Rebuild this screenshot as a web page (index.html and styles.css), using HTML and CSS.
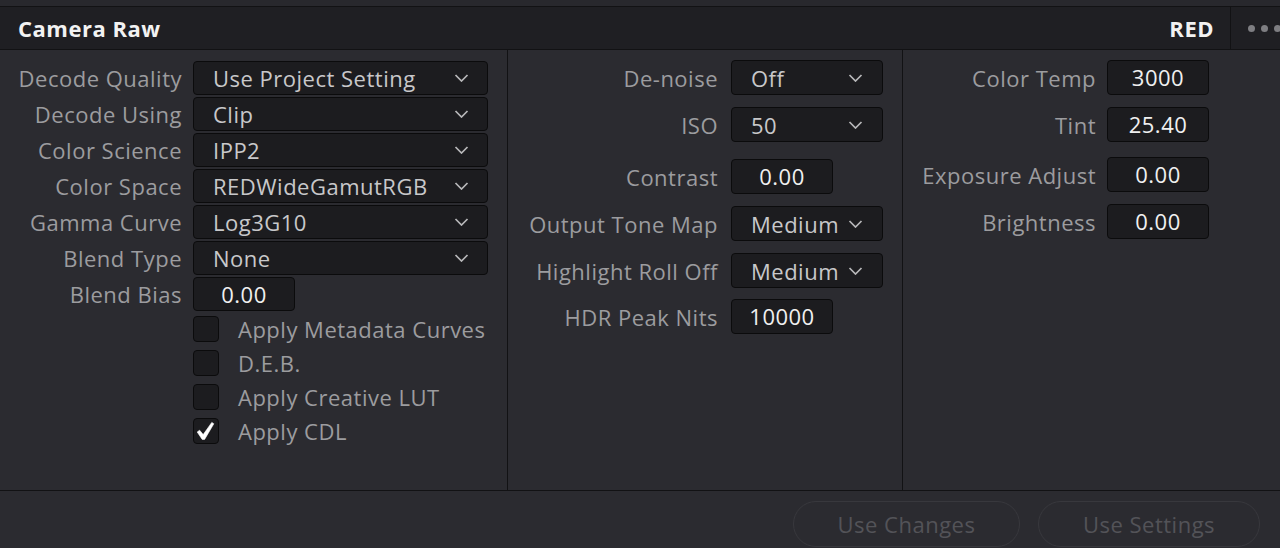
FILE: index.html
```html
<!DOCTYPE html>
<html>
<head>
<meta charset="utf-8">
<link rel="stylesheet" href="styles.css">
</head>
<body>
<div class="app">
  <div class="topstrip"></div>
  <header class="header">
    <div class="title">Camera Raw</div>
    <div class="brand">RED</div>
    <div class="more"><span class="dot"></span><span class="dot"></span><span class="dot"></span></div>
  </header>
  <main class="panels">
    <section class="col col-left">
      <div class="row"><div class="lbl">Decode Quality</div>
        <div class="dd"><span class="val">Use Project Setting</span><svg class="chev" viewBox="0 0 14 8"><path d="M1 1 L7 7 L13 1"/></svg></div></div>
      <div class="row"><div class="lbl">Decode Using</div>
        <div class="dd"><span class="val">Clip</span><svg class="chev" viewBox="0 0 14 8"><path d="M1 1 L7 7 L13 1"/></svg></div></div>
      <div class="row"><div class="lbl">Color Science</div>
        <div class="dd"><span class="val">IPP2</span><svg class="chev" viewBox="0 0 14 8"><path d="M1 1 L7 7 L13 1"/></svg></div></div>
      <div class="row"><div class="lbl">Color Space</div>
        <div class="dd"><span class="val">REDWideGamutRGB</span><svg class="chev" viewBox="0 0 14 8"><path d="M1 1 L7 7 L13 1"/></svg></div></div>
      <div class="row"><div class="lbl">Gamma Curve</div>
        <div class="dd"><span class="val">Log3G10</span><svg class="chev" viewBox="0 0 14 8"><path d="M1 1 L7 7 L13 1"/></svg></div></div>
      <div class="row"><div class="lbl">Blend Type</div>
        <div class="dd"><span class="val">None</span><svg class="chev" viewBox="0 0 14 8"><path d="M1 1 L7 7 L13 1"/></svg></div></div>
      <div class="row"><div class="lbl">Blend Bias</div>
        <div class="num">0.00</div></div>
      <div class="check"><span class="box"></span><span class="ctext">Apply Metadata Curves</span></div>
      <div class="check"><span class="box"></span><span class="ctext">D.E.B.</span></div>
      <div class="check"><span class="box"></span><span class="ctext">Apply Creative LUT</span></div>
      <div class="check"><span class="box checked"><svg viewBox="0 0 24 24"><path d="M3.2 13 L5.6 11.2 L9.2 15.6 L17.8 3.4 L19.8 4.8 L10.6 20.4 L8.2 20.4 Z"/></svg></span><span class="ctext">Apply CDL</span></div>
    </section>
    <section class="col col-mid">
      <div class="row"><div class="lbl">De-noise</div>
        <div class="dd"><span class="val">Off</span><svg class="chev" viewBox="0 0 14 8"><path d="M1 1 L7 7 L13 1"/></svg></div></div>
      <div class="row r-iso"><div class="lbl">ISO</div>
        <div class="dd"><span class="val">50</span><svg class="chev" viewBox="0 0 14 8"><path d="M1 1 L7 7 L13 1"/></svg></div></div>
      <div class="row r-contrast"><div class="lbl">Contrast</div>
        <div class="num">0.00</div></div>
      <div class="row r-tone"><div class="lbl">Output Tone Map</div>
        <div class="dd"><span class="val">Medium</span><svg class="chev" viewBox="0 0 14 8"><path d="M1 1 L7 7 L13 1"/></svg></div></div>
      <div class="row r-roll"><div class="lbl">Highlight Roll Off</div>
        <div class="dd"><span class="val">Medium</span><svg class="chev" viewBox="0 0 14 8"><path d="M1 1 L7 7 L13 1"/></svg></div></div>
      <div class="row r-nits"><div class="lbl">HDR Peak Nits</div>
        <div class="num">10000</div></div>
    </section>
    <section class="col col-right">
      <div class="row"><div class="lbl">Color Temp</div>
        <div class="num">3000</div></div>
      <div class="row r-tint"><div class="lbl">Tint</div>
        <div class="num">25.40</div></div>
      <div class="row r-exp"><div class="lbl">Exposure Adjust</div>
        <div class="num">0.00</div></div>
      <div class="row r-bright"><div class="lbl">Brightness</div>
        <div class="num">0.00</div></div>
    </section>
  </main>
  <footer class="footer">
    <button class="btn btn-changes">Use Changes</button>
    <button class="btn btn-settings">Use Settings</button>
  </footer>
</div>
</body>
</html>
```
FILE: styles.css
```css
* { box-sizing: border-box; }
html, body {
  margin: 0;
  padding: 0;
  background: #2b2b30;
  font-family: "Open Sans", "Noto Sans", sans-serif;
  font-size: 22px;
  letter-spacing: 0.5px;
  color: #9c9c9f;
}
.app {
  width: 1280px;
  height: 548px;
  display: flex;
  flex-direction: column;
  overflow: hidden;
}
.topstrip {
  height: 7px;
  background: #28282d;
  border-bottom: 1px solid #121214;
}
.header {
  height: 43px;
  background: #1f1f23;
  border-bottom: 1px solid #121214;
  display: flex;
  align-items: center;
}
.title {
  flex: 1;
  padding-left: 18px;
  font-weight: 700;
  color: #f2f2f2;
}
.brand {
  font-weight: 700;
  color: #f2f2f2;
  padding-right: 16px;
}
.more {
  align-self: stretch;
  width: 50px;
  border-left: 1px solid #121214;
  display: flex;
  align-items: center;
  gap: 6px;
  padding-left: 17px;
}
.dot {
  width: 7px;
  height: 7px;
  border-radius: 50%;
  background: #7e7e82;
  flex: none;
}
.panels {
  height: 441px;
  display: flex;
  border-bottom: 1px solid #121214;
}
.col {
  display: flex;
  flex-direction: column;
}
.row {
  display: flex;
  align-items: center;
  flex: none;
}
.lbl {
  text-align: right;
  white-space: nowrap;
  flex: none;
}

/* left column */
.col-left {
  width: 508px;
  border-right: 1px solid #121214;
  padding-top: 11px;
  gap: 2px;
}
.col-left .row { height: 34px; gap: 11px; }
.col-left .lbl { width: 182px; }
.col-left .dd { width: 295px; padding-right: 18px; }

/* middle column */
.col-mid {
  width: 395px;
  border-right: 1px solid #121214;
  padding-top: 10px;
}
.col-mid .row { height: 35px; gap: 13px; }
.col-mid .lbl { width: 210px; }
.col-mid .dd { width: 152px; padding-right: 19px; }
.r-iso { margin-top: 12px; }
.r-contrast { margin-top: 17px; }
.r-tone { margin-top: 12px; }
.r-roll { margin-top: 12px; }
.r-nits { margin-top: 11px; }

/* right column */
.col-right {
  flex: 1;
  padding-top: 10px;
}
.col-right .row { height: 35px; gap: 11px; }
.col-right .lbl { width: 193px; }
.r-tint { margin-top: 12px; }
.r-exp { margin-top: 15px; }
.r-bright { margin-top: 12px; }

.dd {
  height: 100%;
  background: #1c1c1f;
  border: 1px solid #0b0b0c;
  border-radius: 4px;
  display: flex;
  align-items: center;
  padding-left: 19px;
  color: #c8c8ca;
}
.val {
  flex: 1;
  white-space: nowrap;
}
.chev {
  width: 15px;
  height: 8px;
  flex: none;
}
.chev path {
  fill: none;
  stroke: #b8b8ba;
  stroke-width: 1.7;
}
.num {
  height: 100%;
  width: 102px;
  background: #1c1c1f;
  border: 1px solid #0b0b0c;
  border-radius: 4px;
  color: #f0f0f0;
  text-align: center;
  line-height: 32px;
}
.check {
  height: 34px;
  display: flex;
  align-items: center;
  gap: 19px;
  padding-left: 193px;
  flex: none;
}
.col-left .check { margin-top: -1px; }
.col-left .check + .check { margin-top: -2px; }
.box {
  width: 26px;
  height: 26px;
  background: #1c1c1f;
  border: 1px solid #0b0b0c;
  border-radius: 4px;
  flex: none;
  display: flex;
}
.box svg {
  width: 24px;
  height: 24px;
}
.box svg path {
  fill: #ffffff;
  stroke: #ffffff;
  stroke-width: 0.6;
  stroke-linejoin: round;
}
.ctext {
  color: #9c9c9f;
  white-space: nowrap;
}
.footer {
  flex: 1;
  display: flex;
  justify-content: flex-end;
  align-items: flex-start;
  gap: 18px;
  padding-top: 10px;
  padding-right: 20px;
}
.btn {
  height: 46px;
  border: 1px solid #38383d;
  border-radius: 23px;
  background: transparent;
  color: #535358;
  font-family: "Open Sans", "Noto Sans", sans-serif;
  font-size: 22px;
  letter-spacing: 0.5px;
  padding: 0;
}
.btn-changes { width: 227px; }
.btn-settings { width: 222px; }
```
